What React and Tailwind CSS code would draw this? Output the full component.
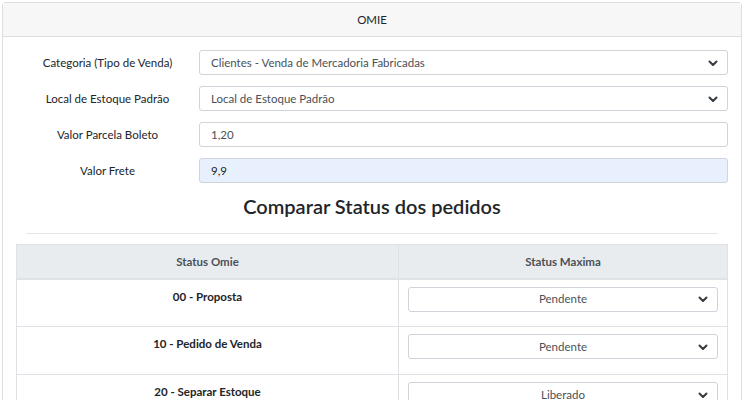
import React from 'react';

const Chevron = () => (
    <svg width="10" height="8" viewBox="0 0 10 8" className="absolute right-[9px] top-1/2 -translate-y-1/2 pointer-events-none">
        <polyline points="1.5,2.5 5,6 8.5,2.5" fill="none" stroke="#343a40" strokeWidth="2" strokeLinecap="round" strokeLinejoin="round" />
    </svg>
);

const FakeSelect = ({ value, center, className = '' }) => (
    <div className={`relative bg-white border border-[#ced4da] rounded-[3px] text-[#495057] flex items-center ${center ? 'justify-center' : 'px-[11px]'} ${className}`}>
        <span>{value}</span>
        <Chevron />
    </div>
);

const FormRow = ({ label, children }) => (
    <div className="flex items-center">
        <label className="w-[183px] shrink-0 text-center text-[#212529]">{label}</label>
        <div className="flex-1">{children}</div>
    </div>
);

const rows = [
    { omie: '00 - Proposta', maxima: 'Pendente' },
    { omie: '10 - Pedido de Venda', maxima: 'Pendente' },
    { omie: '20 - Separar Estoque', maxima: 'Liberado' },
];

export default function App() {
    return (
        <div className="w-[747px] h-[400px] overflow-hidden bg-white pt-[2px] pl-[2px] pr-[5px] text-[11.5px]" style={{ fontFamily: 'Lato, "Open Sans", sans-serif' }}>
            <div className="border border-[#dfdfdf] rounded-t-[3px] h-[420px]">
                <div className="h-[34px] bg-[#f7f7f7] border-b border-[#dfdfdf] flex items-center justify-center text-[#212529]">
                    OMIE
                </div>

                <div className="pl-[13px] pr-[13px] pt-[13px]">
                    <div className="flex flex-col gap-[11px]">
                        <FormRow label="Categoria (Tipo de Venda)">
                            <FakeSelect value="Clientes - Venda de Mercadoria Fabricadas" className="h-[25px]" />
                        </FormRow>
                        <FormRow label="Local de Estoque Padrão">
                            <FakeSelect value="Local de Estoque Padrão" className="h-[25px]" />
                        </FormRow>
                        <FormRow label="Valor Parcela Boleto">
                            <div className="h-[25px] border border-[#ced4da] rounded-[3px] px-[11px] flex items-center text-[#495057] bg-white">1,20</div>
                        </FormRow>
                        <FormRow label="Valor Frete">
                            <div className="h-[25px] border border-[#ced4da] rounded-[3px] px-[11px] flex items-center text-[#212529] bg-[#e8f0fe]">9,9</div>
                        </FormRow>
                    </div>

                    <h3 className="text-center text-[20px] leading-[24px] text-[#212529] font-semibold mt-[11px]">Comparar Status dos pedidos</h3>

                    <div className="mx-[10px] mt-[15px] border-t border-[#e5e5e5]"></div>

                    <table className="w-full mt-[10px] border-collapse">
                        <thead>
                            <tr className="bg-[#e9ecef]">
                                <th className="h-[34px] w-[382px] border border-[#dee2e6] border-b-2 text-[#495057] font-bold">Status Omie</th>
                                <th className="h-[34px] border border-[#dee2e6] border-b-2 text-[#495057] font-bold">Status Maxima</th>
                            </tr>
                        </thead>
                        <tbody>
                            {rows.map((r) => (
                                <tr key={r.omie}>
                                    <td className="h-[48px] border border-[#dee2e6] align-top text-center font-bold text-[#212529] pt-[8px]">{r.omie}</td>
                                    <td className="h-[48px] border border-[#dee2e6] align-top px-[9px] pt-[7px]">
                                        <FakeSelect value={r.maxima} center className="h-[25px]" />
                                    </td>
                                </tr>
                            ))}
                        </tbody>
                    </table>
                </div>
            </div>
        </div>
    );
}
